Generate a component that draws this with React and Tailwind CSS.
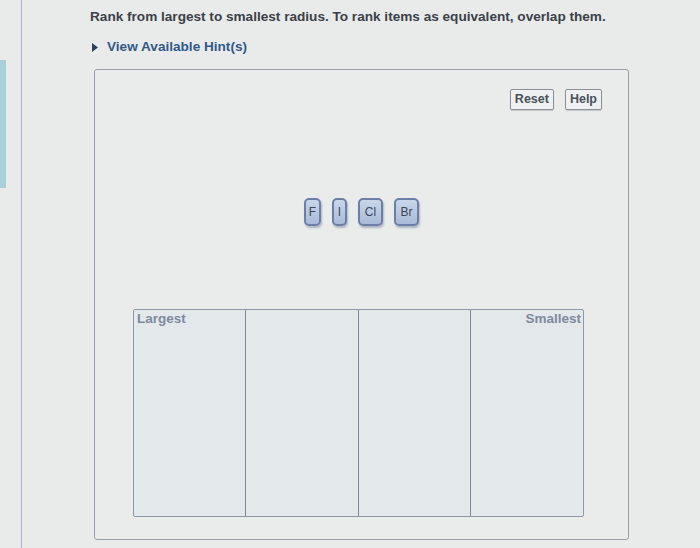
import React from 'react';

const tiles = [
  { label: 'F', w: 'w-[17px]' },
  { label: 'I', w: 'w-[15px]' },
  { label: 'Cl', w: 'w-[25px]' },
  { label: 'Br', w: 'w-[25px]' },
];

function Tile({ label, w }) {
  return (
    <div
      className={`${w} h-[28px] rounded-[5px] border-2 border-[#6d7fa6] bg-gradient-to-b from-[#c9d6ea] to-[#a9bbd8] shadow-[1px_2px_2px_rgba(60,80,120,0.35)] flex items-center justify-center text-[12px] text-[#3d4658]`}
    >
      {label}
    </div>
  );
}

function Btn({ children }) {
  return (
    <button className="h-[21px] px-[4px] border border-[#8a8f98] rounded-[2px] bg-[#eef0f1] text-[12.5px] font-bold text-[#4a505a] leading-none shadow-[0_1px_1px_rgba(0,0,0,0.15)]">
      {children}
    </button>
  );
}

export default function App() {
  return (
    <div
      className="h-[548px] w-[700px] flex bg-[#e8ebea] overflow-hidden"
      style={{ fontFamily: '"Liberation Sans", Arial, sans-serif' }}
    >
      {/* left rail */}
      <div className="w-[22px] shrink-0 border-r border-[#a9b1c6] pt-[60px]">
        <div className="w-[6px] h-[128px] bg-[#a9d0da]" />
      </div>

      <div className="flex-1 flex flex-col pl-[68px]">
        <p className="mt-[9px] text-[13.6px] font-bold text-[#3b4049] leading-[16px]">
          Rank from largest to smallest radius. To rank items as equivalent, overlap them.
        </p>

        <div className="mt-[14px] flex items-center gap-[9px] pl-[2px]">
          <svg width="6" height="9" viewBox="0 0 6 9">
            <path d="M0 0 L6 4.5 L0 9 Z" fill="#2f3f5c" />
          </svg>
          <span className="text-[13.6px] font-bold text-[#31598a] leading-[16px]">View Available Hint(s)</span>
        </div>

        {/* panel */}
        <div className="mt-[14px] ml-[4px] w-[535px] h-[471px] border border-[#9aa0a8] rounded-[3px] bg-[#e9eceb] flex flex-col">
          <div className="flex justify-end gap-[11px] pt-[19px] pr-[26px]">
            <Btn>Reset</Btn>
            <Btn>Help</Btn>
          </div>

          <div className="mt-[88px] flex justify-center gap-[11px]">
            {tiles.map((t) => (
              <Tile key={t.label} {...t} />
            ))}
          </div>

          <div className="mt-[83px] ml-[38px] w-[451px] h-[208px] border border-[#8e98a8] rounded-[2px] bg-[#e3e8ea] grid grid-cols-4">
            <div className="border-r border-[#7d8596] px-[3px] leading-[16px]">
              <span className="text-[13.5px] font-bold text-[#7e8aa0]">Largest</span>
            </div>
            <div className="border-r border-[#7d8596]" />
            <div className="border-r border-[#7d8596]" />
            <div className="px-[2px] text-right leading-[16px]">
              <span className="text-[13.5px] font-bold text-[#7e8aa0]">Smallest</span>
            </div>
          </div>
        </div>
      </div>
    </div>
  );
}
